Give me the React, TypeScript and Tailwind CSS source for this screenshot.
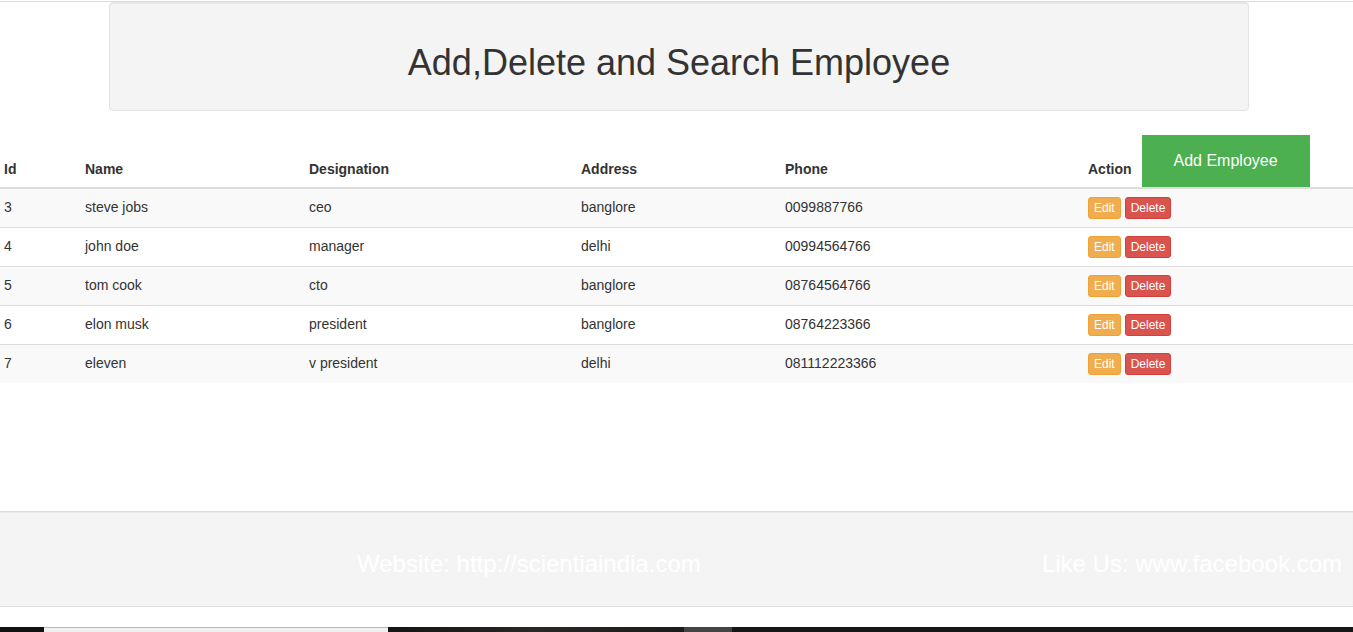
type Employee = {
  id: number;
  name: string;
  designation: string;
  address: string;
  phone: string;
};

const employees: Employee[] = [
  { id: 3, name: "steve jobs", designation: "ceo", address: "banglore", phone: "0099887766" },
  { id: 4, name: "john doe", designation: "manager", address: "delhi", phone: "00994564766" },
  { id: 5, name: "tom cook", designation: "cto", address: "banglore", phone: "08764564766" },
  { id: 6, name: "elon musk", designation: "president", address: "banglore", phone: "08764223366" },
  { id: 7, name: "eleven", designation: "v president", address: "delhi", phone: "081112223366" },
];

export default function App() {
  return (
    <div className="min-h-[632px] bg-white text-[#333] font-['Liberation_Sans',Arial,sans-serif] overflow-hidden">
      {/* Top rule */}
      <div className="mt-px border-t border-[#dddddd]" />

      {/* Jumbotron */}
      <div className="ml-[109px] w-[1140px] h-[109px] bg-[#f4f4f4] border border-[#e3e3e3] rounded-[4px] shadow-[inset_0_1px_1px_rgba(0,0,0,0.05)] pt-[40px]">
        <h1 className="text-center text-[36px] leading-[40px] text-[#333]">
          Add,Delete and Search Employee
        </h1>
      </div>

      {/* Table */}
      <table className="mt-[24px] w-full table-fixed border-collapse text-[14px] leading-[20px]">
        <colgroup>
          <col className="w-[81px]" />
          <col className="w-[224px]" />
          <col className="w-[272px]" />
          <col className="w-[204px]" />
          <col className="w-[303px]" />
          <col />
        </colgroup>
        <thead>
          <tr className="h-[52px] border-b-2 border-[#dddddd]">
            <th className="text-left align-bottom pl-1 pb-2 font-bold">Id</th>
            <th className="text-left align-bottom pl-1 pb-2 font-bold">Name</th>
            <th className="text-left align-bottom pl-1 pb-2 font-bold">Designation</th>
            <th className="text-left align-bottom pl-1 pb-2 font-bold">Address</th>
            <th className="text-left align-bottom pl-1 pb-2 font-bold">Phone</th>
            <th className="text-left align-bottom pl-1 p-0 font-bold">
              <div className="flex items-end">
                <span className="pb-2">Action</span>
                <button className="ml-[10px] w-[168px] h-[52px] bg-[#4caf50] text-white text-[16px] font-normal">
                  Add Employee
                </button>
              </div>
            </th>
          </tr>
        </thead>
        <tbody>
          {employees.map((e, i) => (
            <tr
              key={e.id}
              className={`${i % 2 === 0 ? "bg-[#f9f9f9]" : "bg-white"} ${i > 0 ? "border-t border-[#dddddd]" : ""}`}
            >
              <td className="pl-1 pt-[8px] h-[38px] align-top">{e.id}</td>
              <td className="pl-1 pt-[8px] align-top">{e.name}</td>
              <td className="pl-1 pt-[8px] align-top">{e.designation}</td>
              <td className="pl-1 pt-[8px] align-top">{e.address}</td>
              <td className="pl-1 pt-[8px] align-top">{e.phone}</td>
              <td className="pl-1 py-2">
                <div className="flex gap-1">
                  <button className="h-[22px] px-[5px] text-[12px] leading-[18px] text-white bg-[#f0ad4e] border border-[#eea236] rounded-[3px]">
                    Edit
                  </button>
                  <button className="h-[22px] px-[5px] text-[12px] leading-[18px] text-white bg-[#d9534f] border border-[#d43f3a] rounded-[3px]">
                    Delete
                  </button>
                </div>
              </td>
            </tr>
          ))}
        </tbody>
      </table>

      {/* Footer */}
      <footer className="mt-[128px] h-[96px] bg-[#f4f4f4] border-t border-b border-[#dddddd] shadow-[inset_0_1px_1px_rgba(0,0,0,0.04)] pt-[38px] pl-[357px] pr-[11px] flex justify-between items-start text-white text-[24px] leading-[28px]">
        <span>Website: http://scientiaindia.com</span>
        <span>Like Us: www.facebook.com</span>
      </footer>

      {/* Bottom strip */}
      <div className="mt-[20px] h-[5px] flex">
        <div className="w-[44px] bg-[#111111]" />
        <div className="w-[344px] bg-[#f0f0f0] border-t border-[#bbbbbb]" />
        <div className="w-[296px] bg-gradient-to-r from-[#151515] via-[#2a2824] to-[#1c1c1c]" />
        <div className="w-[48px] bg-[#444444]" />
        <div className="flex-1 bg-[#161616]" />
      </div>
    </div>
  );
}
